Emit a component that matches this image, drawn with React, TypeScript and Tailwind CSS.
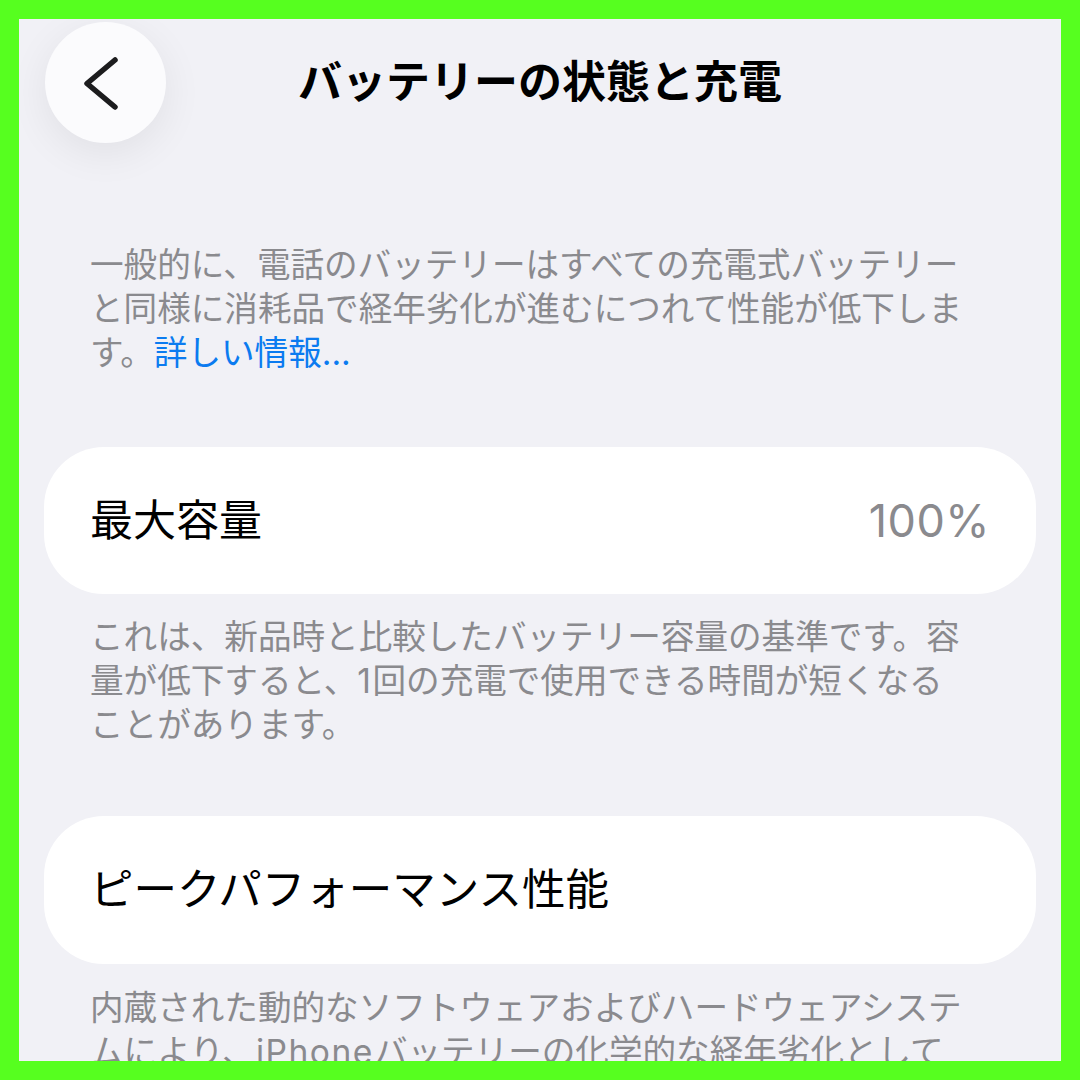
import React from 'react';

const font = { fontFamily: '"Inter", "Noto Sans CJK JP", sans-serif' };

// Back chevron inside a floating circle
const BackButton = () => (
  <div className="w-[121px] h-[121px] rounded-full bg-[#fbfbfd] shadow-[0_10px_40px_rgba(0,0,0,0.07)] flex items-center justify-center">
    <svg width="121" height="121" viewBox="0 0 121 121" fill="none">
      <polyline
        points="70 38 42 61.5 70 85"
        stroke="#1c1c1e"
        strokeWidth="5.5"
        strokeLinecap="round"
        strokeLinejoin="round"
      />
    </svg>
  </div>
);

const Caption: React.FC<{ children: React.ReactNode; className?: string }> = ({ children, className }) => (
  <p className={`ml-[71px] w-[876px] text-[33.6px] leading-[44px] text-[#8a8a8e] ${className ?? ''}`}>{children}</p>
);

// Latin runs are a touch wider in the original system font
const Latin: React.FC<{ children: React.ReactNode }> = ({ children }) => (
  <span className="tracking-[1.5px]">{children}</span>
);

export default function App() {
  return (
    <div className="w-[1080px] h-[1080px] bg-[#56ff1f] p-[19px]" style={font}>
      <div className="w-[1042px] h-[1042px] bg-[#f1f1f6] overflow-hidden">
        {/* Header */}
        <div className="grid grid-cols-[1fr_auto_1fr] items-center pt-[2px] h-[124px]">
          <div className="pl-[26px]">
            <BackButton />
          </div>
          <h1 className="text-[44px] font-bold text-black">バッテリーの状態と充電</h1>
          <div />
        </div>

        <Caption className="mt-[100px]">
          一般的に、電話のバッテリーはすべての充電式バッテリーと同様に消耗品で経年劣化が進むにつれて性能が低下します。
          <span className="text-[#0b7bf0]">詳しい情報...</span>
        </Caption>

        <div className="mt-[72px] mx-[25px] h-[147px] rounded-[60px] bg-white flex items-center justify-between px-[46px]">
          <span className="text-[43px] text-black">最大容量</span>
          <span className="text-[45px] text-[#8a8a8e] tracking-[0.5px]">100%</span>
        </div>

        <Caption className="mt-[21px]">
          これは、新品時と比較したバッテリー容量の基準です。容量が低下すると、<Latin>1</Latin>回の充電で使用できる時間が短くなることがあります。
        </Caption>

        <div className="mt-[69px] mx-[25px] h-[148px] rounded-[60px] bg-white flex items-center px-[46px]">
          <span className="text-[43.5px] text-black">ピークパフォーマンス性能</span>
        </div>

        <Caption className="mt-[22px]">
          内蔵された動的なソフトウェアおよびハードウェアシステムにより、<Latin>iPhone</Latin>バッテリーの化学的な経年劣化として見られるパフォーマンスへの影響が軽減されます。
        </Caption>
      </div>
    </div>
  );
}
